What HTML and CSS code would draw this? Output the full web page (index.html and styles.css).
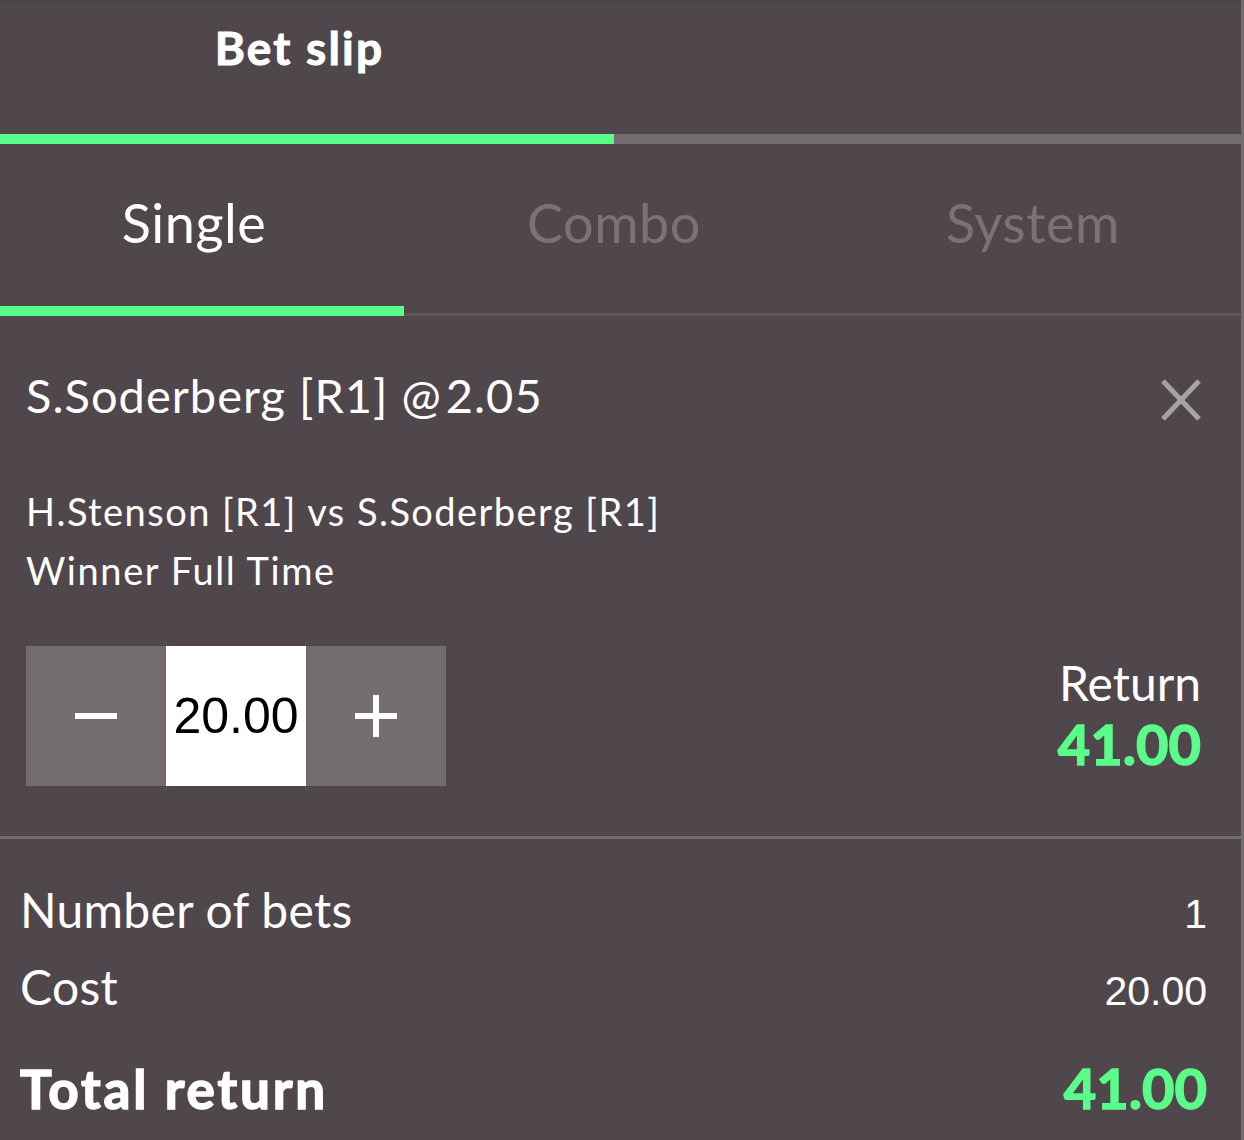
FILE: index.html
```html
<!DOCTYPE html>
<html lang="en">
<head>
<meta charset="utf-8">
<title>Bet slip</title>
<link rel="stylesheet" href="styles.css">
</head>
<body>
<div class="slip">
  <header class="slip-header">
    <div class="slip-title">Bet slip</div>
  </header>
  <div class="progress"><div class="progress-fill"></div></div>

  <nav class="tabs">
    <div class="tab tab-active">Single</div>
    <div class="tab">Combo</div>
    <div class="tab">System</div>
  </nav>
  <div class="tab-indicator"><div class="tab-indicator-fill"></div></div>

  <section class="selection">
    <div class="sel-head">
      <div class="sel-title">S.Soderberg [R1] @&#8202;2.05</div>
      <button class="sel-close" aria-label="Remove">
        <svg width="40" height="42" viewBox="0 0 40 42"><path d="M2 2 L38 40 M38 2 L2 40" stroke="#a7a2a5" stroke-width="5" fill="none"/></svg>
      </button>
    </div>
    <div class="sel-event">H.Stenson [R1] vs S.Soderberg [R1]</div>
    <div class="sel-market">Winner Full Time</div>

    <div class="stake-row">
      <div class="stake">
        <div class="stake-btn">
          <svg width="42" height="42" viewBox="0 0 42 42"><rect x="0" y="18" width="42" height="6" fill="#fff"/></svg>
        </div>
        <div class="stake-input">20.00</div>
        <div class="stake-btn">
          <svg width="42" height="42" viewBox="0 0 42 42"><rect x="0" y="18" width="42" height="6" fill="#fff"/><rect x="18" y="0" width="6" height="42" fill="#fff"/></svg>
        </div>
      </div>
      <div class="ret">
        <div class="ret-label">Return</div>
        <div class="ret-value">41.00</div>
      </div>
    </div>
  </section>

  <section class="summary">
    <div class="sum-row">
      <span class="sum-label">Number of bets</span>
      <span class="sum-value">1</span>
    </div>
    <div class="sum-row">
      <span class="sum-label">Cost</span>
      <span class="sum-value">20.00</span>
    </div>
    <div class="sum-row sum-total">
      <span class="sum-label">Total return</span>
      <span class="sum-green">41.00</span>
    </div>
  </section>
</div>
</body>
</html>
```

FILE: styles.css
```css
* { box-sizing: border-box; }

html, body {
  margin: 0;
  padding: 0;
  background: #50474c;
}

body {
  font-family: Lato, "Noto Sans", sans-serif;
  color: #ffffff;
}

.slip {
  width: 1244px;
  min-height: 1140px;
  background: #50474c;
  border-right: 3px solid #736c71;
}

.slip-header {
  height: 134px;
  display: grid;
  grid-template-columns: 599px 1fr;
  background: linear-gradient(to bottom, #4a4548 0, #50474c 12px);
}

.slip-title {
  padding-top: 20px;
  text-align: center;
  font-weight: 700;
  font-size: 46px;
  line-height: 56px;
  letter-spacing: 2.2px;
  -webkit-text-stroke: 1px #ffffff;
}

.progress {
  height: 10px;
  background: #736c71;
  display: flex;
}

.progress-fill {
  width: 614px;
  background: #5afc8a;
}

.tabs {
  display: grid;
  grid-template-columns: 388px 452px 386px;
  padding-top: 46px;
  padding-bottom: 51px;
}

.tab {
  text-align: center;
  font-size: 54px;
  line-height: 65px;
  letter-spacing: 0.5px;
  color: #797276;
}

.tab-active {
  color: #ffffff;
}

.tab-indicator {
  height: 10px;
  display: flex;
  align-items: flex-end;
  background: linear-gradient(to bottom, transparent 7px, #5f565b 7px);
}

.tab-indicator-fill {
  width: 404px;
  height: 10px;
  background: #5afc8a;
}

.selection {
  padding: 51px 40px 50px 26px;
}

.sel-head {
  display: flex;
  justify-content: space-between;
  align-items: flex-start;
}

.sel-title {
  font-size: 47px;
  line-height: 56px;
  letter-spacing: 1px;
}

.sel-close {
  margin: 12px 0 0 0;
  padding: 0;
  border: 0;
  background: none;
  width: 40px;
  height: 42px;
  display: block;
}

.sel-close svg { display: block; }

.sel-event {
  margin-top: 59px;
  font-size: 38px;
  line-height: 59px;
  letter-spacing: 1.45px;
}

.sel-market {
  font-size: 38px;
  line-height: 59px;
  letter-spacing: 1.6px;
}

.stake-row {
  margin-top: 46px;
  display: flex;
  justify-content: space-between;
  align-items: flex-start;
}

.stake {
  display: flex;
  height: 140px;
}

.stake-btn {
  width: 140px;
  height: 140px;
  background: #736c71;
  display: flex;
  align-items: center;
  justify-content: center;
}

.stake-btn svg { display: block; }

.stake-input {
  width: 140px;
  height: 140px;
  background: #ffffff;
  color: #000000;
  font-family: "Liberation Sans", Arial, sans-serif;
  font-size: 50px;
  display: flex;
  align-items: center;
  justify-content: center;
}

.ret {
  padding-top: 7px;
  text-align: right;
}

.ret-label {
  font-size: 48px;
  line-height: 60px;
}

.ret-value {
  font-size: 56px;
  line-height: 62px;
  font-weight: 700;
  color: #5afc8a;
  -webkit-text-stroke: 1.5px #5afc8a;
}

.summary {
  border-top: 3px solid #716a6e;
  padding: 32px 34px 0 20px;
}

.sum-row {
  display: flex;
  justify-content: space-between;
  align-items: baseline;
  height: 77px;
  line-height: 77px;
}

.sum-label {
  font-size: 48px;
  letter-spacing: 0.3px;
}

.sum-value {
  font-family: "Liberation Sans", Arial, sans-serif;
  font-size: 41px;
}

.sum-total {
  margin-top: 20px;
  height: 85px;
  line-height: 85px;
}

.sum-total .sum-label {
  font-size: 53px;
  font-weight: 700;
  letter-spacing: 2.8px;
  -webkit-text-stroke: 1.5px #ffffff;
}

.sum-green {
  font-size: 56px;
  font-weight: 700;
  color: #5afc8a;
  -webkit-text-stroke: 1.5px #5afc8a;
}
```
